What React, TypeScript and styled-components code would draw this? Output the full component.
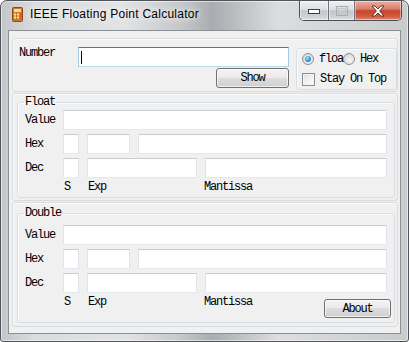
import styled, { createGlobalStyle } from 'styled-components';

const GlobalStyle = createGlobalStyle`
  * {
    box-sizing: border-box;
  }

  body {
    margin: 0;
    background: #ffffff;
  }
`;

const MONO = `'Liberation Mono', 'DejaVu Sans Mono', monospace`;

const App = () => {
  return (
    <>
      <GlobalStyle />
      <Window>
        <TitleBar>
          <AppIcon />
          <Title>IEEE Floating Point Calculator</Title>
          <CaptionButtons>
            <CaptionButton $width={28}>
              <svg width="12" height="6" viewBox="0 0 12 6">
                <rect x="0.5" y="1.5" width="11" height="4" fill="#fff" stroke="#3c3f44" />
              </svg>
            </CaptionButton>
            <CaptionButton $width={26}>
              <svg width="12" height="10" viewBox="0 0 12 10">
                <rect x="0.5" y="0.5" width="11" height="9" fill="none" stroke="#a9abae" />
                <rect x="2.5" y="2.5" width="7" height="5" fill="none" stroke="#c4c6c8" />
              </svg>
            </CaptionButton>
            <CaptionButton $width={47} $close>
              <svg width="14" height="12" viewBox="0 0 14 12">
                <path
                  d="M1 1 L4 1 L7 4 L10 1 L13 1 L8.6 6 L13 11 L10 11 L7 8 L4 11 L1 11 L5.4 6 Z"
                  fill="#fff"
                  stroke="#4a2a25"
                  strokeWidth="0.9"
                  strokeLinejoin="round"
                />
              </svg>
            </CaptionButton>
          </CaptionButtons>
        </TitleBar>

        <Client>
          <TopPanel>
            <FieldLabel $width={59}>Number</FieldLabel>
            <NumberColumn>
              <Field $focused>
                <Caret />
              </Field>
              <Button $width={73}>Show</Button>
            </NumberColumn>
            <OptionsBox>
              <OptionRow>
                <Radio $checked />
                <OptionText $width={24}>floa</OptionText>
                <Radio />
                <OptionText>Hex</OptionText>
              </OptionRow>
              <OptionRow>
                <CheckBox />
                <OptionText>Stay On Top</OptionText>
              </OptionRow>
            </OptionsBox>
          </TopPanel>

          <Panel $top={2} $bottom={2}>
            <FormatGroup title="Float" $padTop={2} />
          </Panel>

          <Panel $top={4} $bottom={3} $grow>
            <FormatGroup title="Double" $padTop={6} withAbout />
          </Panel>
        </Client>
      </Window>
    </>
  );
};

export default App;

type FormatGroupProps = {
  title: string;
  $padTop: number;
  withAbout?: boolean;
};

const FormatGroup = ({ title, $padTop, withAbout }: FormatGroupProps) => (
  <GroupBox $padTop={$padTop}>
    <Legend>{title}</Legend>
    <Row>
      <FieldLabel $width={38}>Value</FieldLabel>
      <Field $grow />
    </Row>
    <Row>
      <FieldLabel $width={38}>Hex</FieldLabel>
      <Field $width={16} />
      <Field $width={43} />
      <Field $grow />
    </Row>
    <Row>
      <FieldLabel $width={38}>Dec</FieldLabel>
      <Field $width={16} />
      <Field $width={110} />
      <Field $grow />
    </Row>
    <CaptionRow>
      <Caption $width={24}>S</Caption>
      <Caption $width={116}>Exp</Caption>
      <Caption>Mantissa</Caption>
      {withAbout && <AboutButton $width={67}>About</AboutButton>}
    </CaptionRow>
  </GroupBox>
);

const AppIcon = () => (
  <IconBox>
    <svg width="11" height="15" viewBox="0 0 11 15">
      <rect x="0.5" y="0.5" width="10" height="14" rx="1" fill="#c97a24" stroke="#8a4a12" />
      <rect x="2" y="2" width="7" height="3" fill="#f3d9a4" />
      <rect x="2" y="6.5" width="2" height="2" fill="#f7e2b6" />
      <rect x="5" y="6.5" width="2" height="2" fill="#f7e2b6" />
      <rect x="2" y="9.5" width="2" height="2" fill="#f7e2b6" />
      <rect x="5" y="9.5" width="2" height="2" fill="#f7e2b6" />
      <rect x="8" y="6.5" width="1.5" height="5" fill="#e8503a" />
    </svg>
  </IconBox>
);

const Window = styled.div`
  display: flex;
  flex-direction: column;

  width: 409px;
  height: 342px;

  border: 1px solid #50555b;
  border-radius: 7px 7px 3px 3px;
  overflow: hidden;

  background: linear-gradient(
    90deg,
    #c3c5c8 0%,
    #d9dbdd 8%,
    #e2e3e4 30%,
    #c6c8ca 44%,
    #a9adb1 52%,
    #c2c4c6 60%,
    #dcdddf 68%,
    #c9cbcd 100%
  );
  box-shadow: inset 0 0 0 1px rgba(255, 255, 255, 0.55);
`;

const TitleBar = styled.div`
  display: flex;
  align-items: flex-start;

  height: 29px;
  flex-shrink: 0;
`;

const IconBox = styled.div`
  display: flex;

  margin: 6px 0 0 11px;
`;

const Title = styled.div`
  margin: 6px 0 0 7px;

  color: #000;
  font-family: 'Liberation Sans', Arial, sans-serif;
  font-size: 12px;
  letter-spacing: 0.25px;
  line-height: 15px;
  white-space: nowrap;

  text-shadow: 0 0 6px rgba(255, 255, 255, 0.95), 0 0 10px rgba(255, 255, 255, 0.8);
`;

const CaptionButtons = styled.div`
  display: flex;

  margin: 0 6px 0 auto;

  border: 1px solid #4b5057;
  border-top: none;
  border-radius: 0 0 5px 5px;
  overflow: hidden;
`;

const CaptionButton = styled.div<{ $width: number; $close?: boolean }>`
  display: flex;
  align-items: center;
  justify-content: center;

  width: ${(p) => p.$width}px;
  height: 19px;

  & + & {
    border-left: 1px solid #6f7378;
  }

  background: ${(p) =>
    p.$close
      ? 'linear-gradient(180deg, #eab0a3 0%, #dd7e6a 42%, #c8442d 52%, #cf5a43 80%, #e08a6f 100%)'
      : 'linear-gradient(180deg, #eef0f2 0%, #dcdfe2 45%, #c3c7cb 52%, #cdd0d3 80%, #dfe1e3 100%)'};
  box-shadow: inset 0 0 0 1px rgba(255, 255, 255, 0.45);
`;

const Client = styled.div`
  display: flex;
  flex-direction: column;
  flex: 1;
  gap: 1px;

  margin: 0 7px 7px 7px;
  padding: 7px 2px 6px 3px;

  border: 1px solid #8b9095;
  background: #f0f0f0;
`;

const Panel = styled.div<{ $top: number; $bottom: number; $grow?: boolean }>`
  display: flex;
  flex-direction: column;
  ${(p) => (p.$grow ? 'flex: 1;' : '')}

  padding: ${(p) => p.$top}px 2px ${(p) => p.$bottom}px 4px;

  border: 1px solid #d9dcdf;
  border-radius: 3px;
  box-shadow: inset 1px 1px 0 #fbfbfb;
`;

const TopPanel = styled.div`
  display: flex;
  align-items: flex-start;

  height: 54px;
  padding: 8px 0 0 6px;

  border: 1px solid #d9dcdf;
  border-radius: 3px;
  box-shadow: inset 1px 1px 0 #fbfbfb;
`;

const FieldLabel = styled.div<{ $width: number }>`
  width: ${(p) => p.$width}px;
  flex-shrink: 0;

  color: #000;
  font-family: ${MONO};
  font-size: 12px;
  letter-spacing: -1.2px;
  line-height: 13px;
  white-space: nowrap;
`;

const NumberColumn = styled.div`
  display: flex;
  flex-direction: column;
  align-items: flex-end;
  gap: 1px;

  width: 211px;
`;

const Field = styled.div<{ $width?: number; $grow?: boolean; $focused?: boolean }>`
  display: flex;
  align-items: center;

  width: ${(p) => (p.$width ? `${p.$width}px` : '100%')};
  ${(p) => (p.$grow ? 'flex: 1;' : '')}
  height: 20px;
  flex-shrink: 0;
  padding-left: 2px;

  background: #fff;
  border: 1px solid;
  border-color: ${(p) =>
    p.$focused ? '#3d7bad #a4c9e3 #b7d9ed #a4c9e3' : '#c9cdd2 #e2e3ea #e3e9ef #e2e3ea'};
`;

const Caret = styled.div`
  width: 1px;
  height: 13px;

  background: #000;
`;

const Button = styled.div<{ $width: number }>`
  display: flex;
  align-items: center;
  justify-content: center;

  width: ${(p) => p.$width}px;
  height: 20px;
  flex-shrink: 0;

  border: 1px solid #707070;
  border-radius: 3px;
  background: linear-gradient(180deg, #f2f2f2 0%, #ebebeb 49%, #dddddd 50%, #cfcfcf 100%);
  box-shadow: inset 0 0 0 1px rgba(255, 255, 255, 0.7);

  color: #000;
  font-family: ${MONO};
  font-size: 12px;
  letter-spacing: -1.2px;
`;

const AboutButton = styled(Button)`
  height: 19px;
  margin: 5px -4px 0 auto;
`;

const OptionsBox = styled.div`
  display: flex;
  flex-direction: column;
  gap: 8px;

  width: 101px;
  height: 42px;
  margin: 1px 0 0 7px;
  padding: 4px 0 0 5px;

  border: 1px solid #d5dfe5;
  border-radius: 3px;
  box-shadow: inset 1px 1px 0 #fbfbfb;
`;

const OptionRow = styled.div`
  display: flex;
  align-items: center;

  height: 12px;
`;

const OptionText = styled.div<{ $width?: number }>`
  ${(p) => (p.$width ? `width: ${p.$width}px;` : '')}
  margin-left: 5px;
  flex-shrink: 0;

  color: #000;
  font-family: ${MONO};
  font-size: 12px;
  letter-spacing: -1.2px;
  line-height: 13px;
  white-space: nowrap;
`;

const Radio = styled.div<{ $checked?: boolean }>`
  display: flex;
  align-items: center;
  justify-content: center;

  width: 12px;
  height: 12px;
  flex-shrink: 0;

  border: 1px solid #8e8f8f;
  border-radius: 50%;
  background: radial-gradient(circle at 60% 65%, #f6f6f6 0%, #dcdcdc 70%, #cfcfcf 100%);

  &::after {
    content: '';
    display: ${(p) => (p.$checked ? 'block' : 'none')};

    width: 6px;
    height: 6px;

    border-radius: 50%;
    background: radial-gradient(circle at 40% 35%, #a8e4ff 0%, #36a5e6 45%, #0f5fa8 100%);
  }
`;

const CheckBox = styled.div`
  width: 13px;
  height: 13px;
  flex-shrink: 0;

  border: 1px solid #8e8f8f;
  background: linear-gradient(135deg, #dedede 0%, #f4f4f4 60%, #fdfdfd 100%);
  box-shadow: inset 0 0 0 1px #f4f4f4;
`;

const GroupBox = styled.fieldset<{ $padTop: number }>`
  display: flex;
  flex-direction: column;
  gap: 4px;

  min-width: 0;
  margin: 0;
  padding: ${(p) => p.$padTop}px 7px 4px 7px;

  border: 1px solid #d5dfe5;
  border-radius: 3px;
  box-shadow: inset 1px 1px 0 #fbfbfb;
`;

const Legend = styled.legend`
  margin-left: -1px;
  padding: 0 1px;

  color: #000;
  font-family: ${MONO};
  font-size: 12px;
  letter-spacing: -1.2px;
  line-height: 12px;
`;

const Row = styled.div`
  display: flex;
  align-items: center;
  gap: 8px;

  & > ${FieldLabel} {
    margin-right: -8px;
  }
`;

const CaptionRow = styled.div`
  display: flex;
  align-items: flex-start;

  margin-top: -3px;
  padding-left: 38px;
`;

const Caption = styled.div<{ $width?: number }>`
  ${(p) => (p.$width ? `width: ${p.$width}px;` : '')}
  flex-shrink: 0;
  margin-top: 2px;
  padding-left: 1px;

  color: #000;
  font-family: ${MONO};
  font-size: 12px;
  letter-spacing: -1.2px;
  line-height: 12px;
`;
